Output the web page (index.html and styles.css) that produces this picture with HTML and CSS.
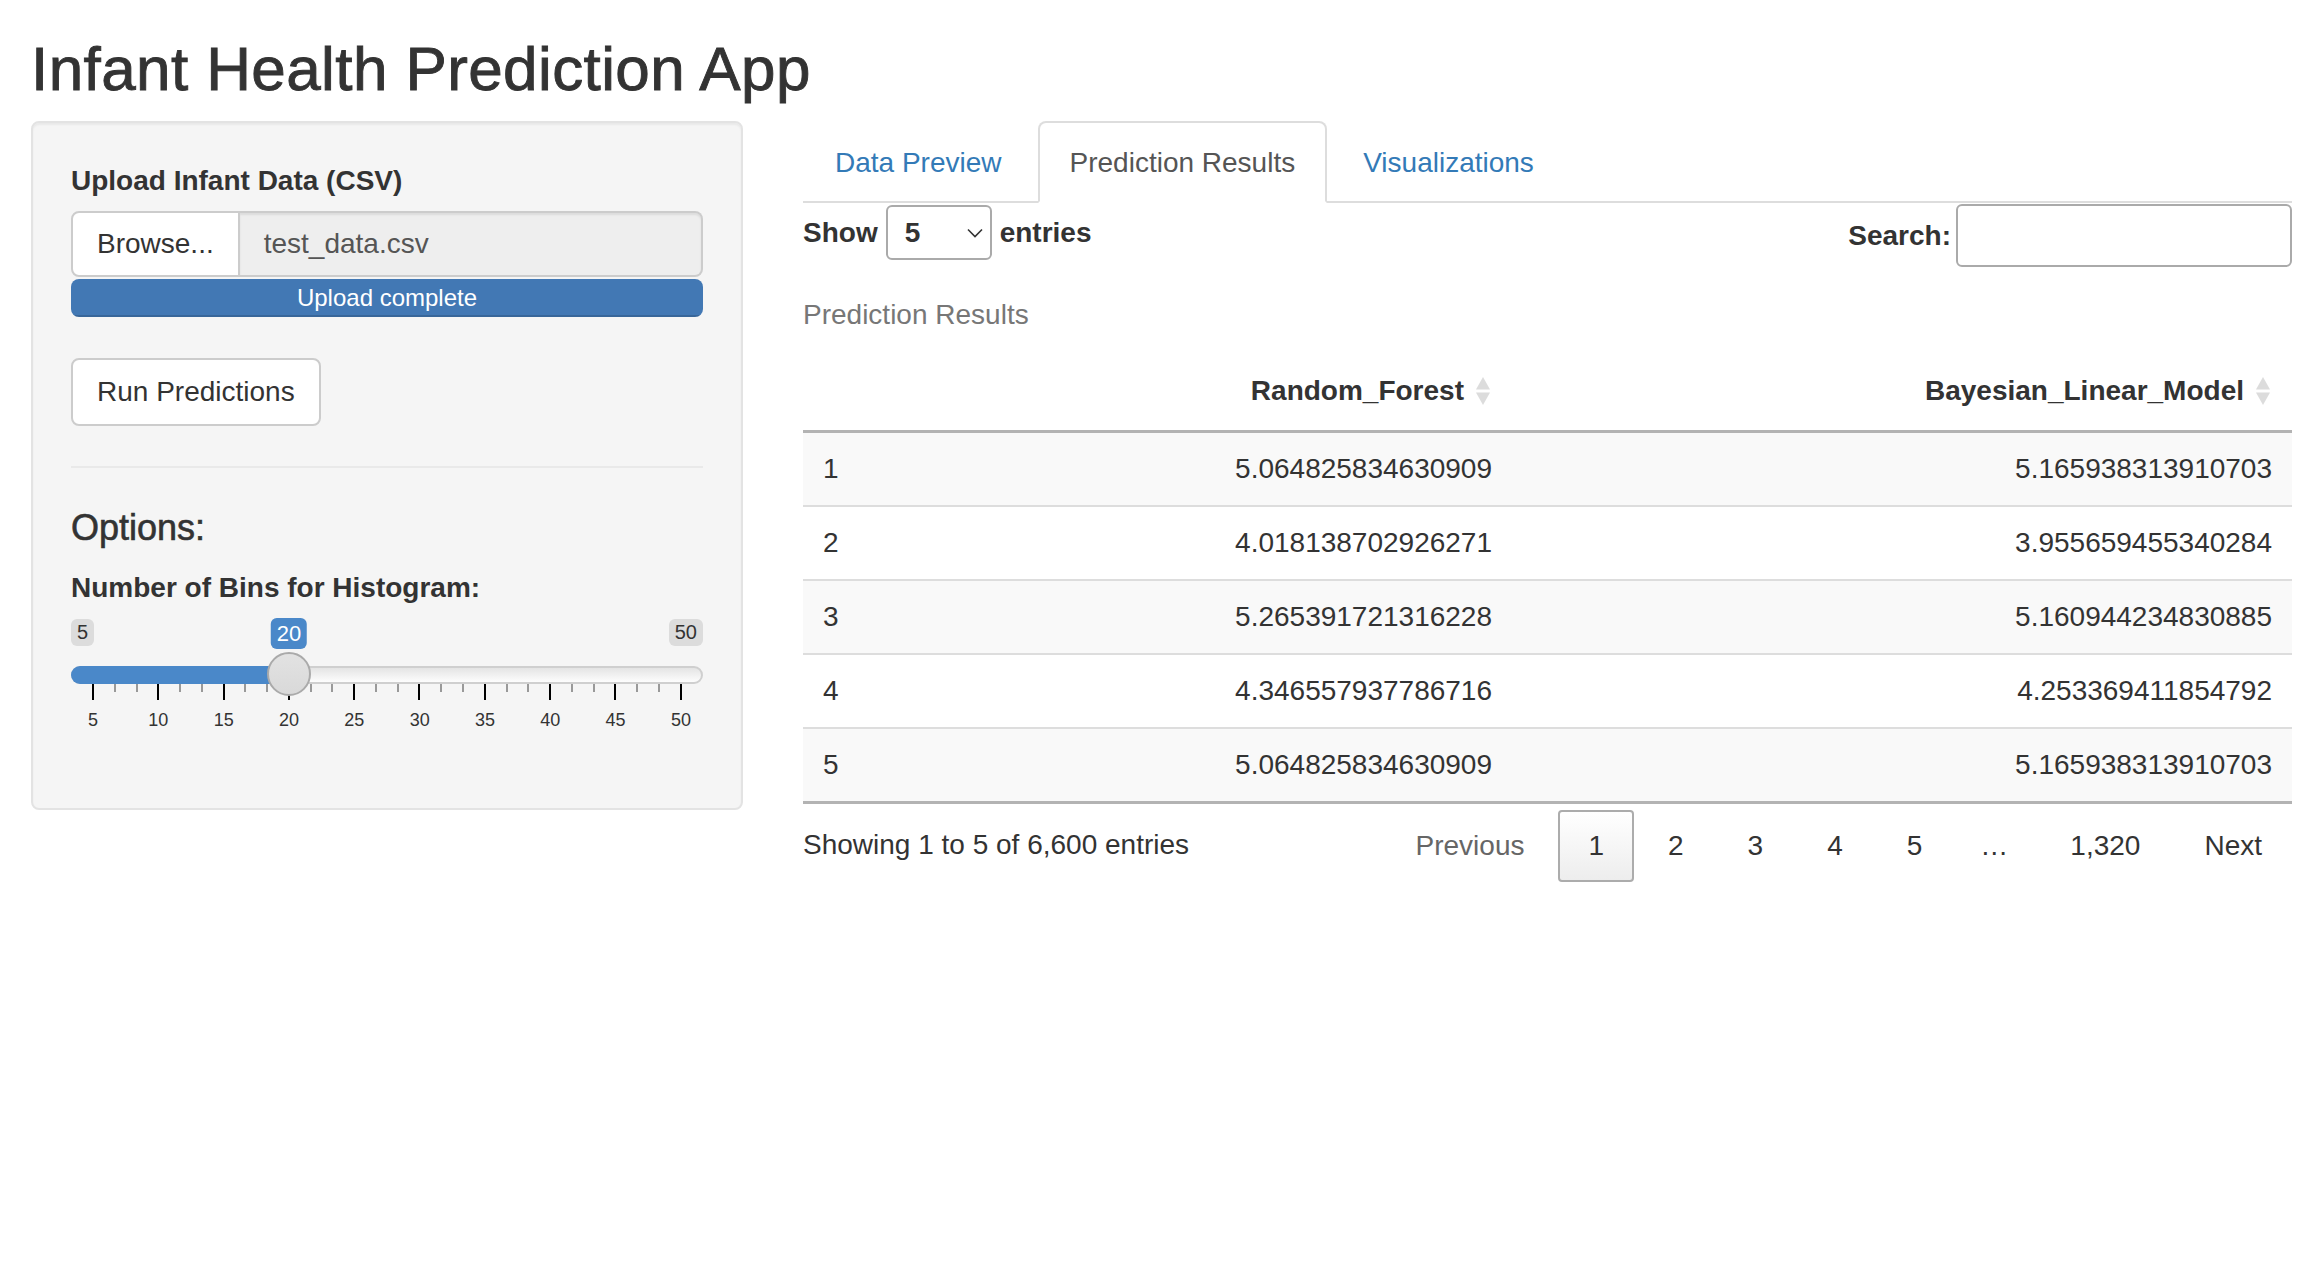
FILE: index.html
```html
<!DOCTYPE html>
<html lang="en">
<head>
<meta charset="utf-8">
<title>Infant Health Prediction App</title>
<link rel="stylesheet" href="styles.css">
</head>
<body>
<div class="page">
  <h2 class="app-title">Infant Health Prediction App</h2>
  <div class="layout">
    <aside class="sidebar">
      <div class="well">
        <div class="file-group">
          <label class="control-label">Upload Infant Data (CSV)</label>
          <div class="input-group">
            <span class="btn-browse">Browse...</span>
            <span class="file-name">test_data.csv</span>
          </div>
          <div class="progress"><div class="progress-bar">Upload complete</div></div>
        </div>
        <button class="btn-run" type="button">Run Predictions</button>
        <hr class="divider">
        <h4 class="options-title">Options:</h4>
        <div class="slider-group">
          <label class="control-label">Number of Bins for Histogram:</label>
          <div class="irs">
            <div class="irs-top">
              <span class="irs-min">5</span>
              <span class="irs-max">50</span>
            </div>
            <span class="irs-single" style="left: calc(22px + (100% - 44px) * 0.33333)">20</span>
            <div class="irs-track">
              <div class="irs-line"></div>
              <span class="irs-bar" style="width: calc(22px + (100% - 44px) * 0.33333)"></span>
              <span class="irs-handle" style="left: calc((100% - 44px) * 0.33333)"></span>
            </div>
            <div class="irs-grid">
              <span class="tick"></span><span class="tick small"></span><span class="tick small"></span>
              <span class="tick"></span><span class="tick small"></span><span class="tick small"></span>
              <span class="tick"></span><span class="tick small"></span><span class="tick small"></span>
              <span class="tick"></span><span class="tick small"></span><span class="tick small"></span>
              <span class="tick"></span><span class="tick small"></span><span class="tick small"></span>
              <span class="tick"></span><span class="tick small"></span><span class="tick small"></span>
              <span class="tick"></span><span class="tick small"></span><span class="tick small"></span>
              <span class="tick"></span><span class="tick small"></span><span class="tick small"></span>
              <span class="tick"></span><span class="tick small"></span><span class="tick small"></span>
              <span class="tick"></span>
            </div>
            <div class="irs-grid-text">
              <span>5</span><span>10</span><span>15</span><span>20</span><span>25</span>
              <span>30</span><span>35</span><span>40</span><span>45</span><span>50</span>
            </div>
          </div>
        </div>
      </div>
    </aside>

    <main class="main">
      <ul class="nav-tabs">
        <li class="tab"><a>Data Preview</a></li>
        <li class="tab active"><a>Prediction Results</a></li>
        <li class="tab"><a>Visualizations</a></li>
      </ul>

      <div class="dt-wrapper">
        <div class="dt-top">
          <label class="dt-length">Show<span class="dt-select"><span>5</span><svg class="chev" width="16" height="10" viewBox="0 0 16 10"><path d="M1 1.5 L8 8.5 L15 1.5" fill="none" stroke="#333" stroke-width="1.6"/></svg></span>entries</label>
          <label class="dt-filter">Search:<input class="dt-search" type="search"></label>
        </div>

        <table class="dt">
          <caption>Prediction Results</caption>
          <colgroup><col class="c1"><col class="c2"><col class="c3"></colgroup>
          <thead>
            <tr>
              <th></th>
              <th class="num">Random_Forest<svg class="sort" width="14" height="28" viewBox="0 0 14 28"><path d="M7 0 L14 12.5 L0 12.5 Z" fill="#dcdcdc"/><path d="M0 15.5 L14 15.5 L7 28 Z" fill="#dcdcdc"/></svg></th>
              <th class="num">Bayesian_Linear_Model<svg class="sort" width="14" height="28" viewBox="0 0 14 28"><path d="M7 0 L14 12.5 L0 12.5 Z" fill="#dcdcdc"/><path d="M0 15.5 L14 15.5 L7 28 Z" fill="#dcdcdc"/></svg></th>
            </tr>
          </thead>
          <tbody>
            <tr><td>1</td><td class="num">5.064825834630909</td><td class="num">5.165938313910703</td></tr>
            <tr><td>2</td><td class="num">4.018138702926271</td><td class="num">3.955659455340284</td></tr>
            <tr><td>3</td><td class="num">5.265391721316228</td><td class="num">5.160944234830885</td></tr>
            <tr><td>4</td><td class="num">4.346557937786716</td><td class="num">4.253369411854792</td></tr>
            <tr><td>5</td><td class="num">5.064825834630909</td><td class="num">5.165938313910703</td></tr>
          </tbody>
        </table>

        <div class="dt-bottom">
          <div class="dt-info">Showing 1 to 5 of 6,600 entries</div>
          <div class="dt-paginate">
            <a class="pg disabled">Previous</a><a class="pg current">1</a><a class="pg">2</a><a class="pg">3</a><a class="pg">4</a><a class="pg">5</a><span class="ellipsis">…</span><a class="pg">1,320</a><a class="pg">Next</a>
          </div>
        </div>
      </div>
    </main>
  </div>
</div>
</body>
</html>
```

FILE: styles.css
```css
* { box-sizing: border-box; }

html, body {
  margin: 0;
  padding: 0;
  background: #fff;
}

body {
  font-family: "Liberation Sans", Arial, Helvetica, sans-serif;
  font-size: 28px;
  line-height: 40px;
  color: #333;
}

.page {
  padding: 0 20px 0 31px;
}

.app-title {
  font-size: 62px;
  font-weight: 400;
  line-height: 66px;
  margin: 36px 0 19px;
  color: #333;
  letter-spacing: 0.4px;
  -webkit-text-stroke: 0.9px #333;
}

.layout {
  display: grid;
  grid-template-columns: 712px 1fr;
  column-gap: 60px;
  align-items: start;
}

/* ---------- Sidebar ---------- */
.well {
  background: #f5f5f5;
  border: 2px solid #e3e3e3;
  border-radius: 8px;
  box-shadow: inset 0 2px 2px rgba(0, 0, 0, 0.05);
  padding: 38px;
}

.control-label {
  display: block;
  font-weight: 700;
  margin-bottom: 10px;
}

.input-group {
  display: flex;
  height: 66px;
}

.btn-browse {
  display: flex;
  align-items: center;
  padding: 0 24px;
  background: #fff;
  border: 2px solid #ccc;
  border-radius: 8px 0 0 8px;
  color: #333;
}

.file-name {
  flex: 1;
  display: flex;
  align-items: center;
  padding: 0 24px;
  background: #eee;
  border: 2px solid #ccc;
  border-left: 0;
  border-radius: 0 8px 8px 0;
  color: #555;
  box-shadow: inset 0 2px 2px rgba(0, 0, 0, 0.075);
}

.progress {
  margin-top: 2px;
  height: 38px;
  border-radius: 8px;
  overflow: hidden;
  background: #f5f5f5;
}

.progress-bar {
  height: 100%;
  background: #4278b4;
  color: #fff;
  font-size: 24px;
  line-height: 38px;
  text-align: center;
  box-shadow: inset 0 -2px 0 rgba(0, 0, 0, 0.15);
}

.btn-run {
  display: block;
  margin-top: 41px;
  height: 68px;
  padding: 12px 24px;
  font: inherit;
  line-height: 40px;
  color: #333;
  background: #fff;
  border: 2px solid #ccc;
  border-radius: 8px;
}

.divider {
  margin: 40px 0;
  border: 0;
  border-top: 2px solid #e9e9e9;
  height: 0;
}

.options-title {
  font-size: 36px;
  font-weight: 400;
  line-height: 39.6px;
  margin: 0 0 20px;
  color: #333;
  -webkit-text-stroke: 0.6px #333;
}

.slider-group {
  margin-bottom: 39px;
}

.irs {
  position: relative;
}

.irs-top {
  display: flex;
  justify-content: space-between;
  align-items: flex-start;
  height: 30px;
  padding-top: 1px;
}

.irs-min,
.irs-max {
  font-size: 20px;
  line-height: 23px;
  padding: 2px 6px;
  background: rgba(0, 0, 0, 0.1);
  border-radius: 6px;
  color: #333;
}

.irs-single {
  position: absolute;
  top: 0;
  transform: translateX(-50%);
  font-size: 22px;
  line-height: 27px;
  padding: 2px 6px;
  background: #4a88c9;
  color: #fff;
  border-radius: 6px;
}

.irs-track {
  position: relative;
  margin-top: 18px;
  height: 18px;
}

.irs-line {
  height: 18px;
  border: 2px solid #cfcfcf;
  border-radius: 9px;
  background: linear-gradient(to bottom, #e4e4e4, #fdfdfd);
}

.irs-bar {
  position: absolute;
  top: 0;
  left: 0;
  height: 18px;
  background: #4a88c9;
  border-radius: 9px 0 0 9px;
}

.irs-handle {
  position: absolute;
  top: -14px;
  width: 44px;
  height: 44px;
  border-radius: 50%;
  border: 2px solid #aaa;
  background: linear-gradient(to bottom, #e2e2e2, #d9d9d9);
}

.irs-grid {
  display: flex;
  justify-content: space-between;
  align-items: flex-start;
  padding: 0 21px;
  height: 16px;
}

.tick {
  width: 2px;
  height: 16px;
  background: #000;
}

.tick.small {
  height: 8px;
  background: #999;
}

.irs-grid-text {
  display: flex;
  justify-content: space-between;
  padding: 0 2px;
  margin-top: 9px;
  font-size: 18px;
  line-height: 22px;
  color: #333;
}

.irs-grid-text span {
  width: 40px;
  text-align: center;
}

/* ---------- Tabs ---------- */
.nav-tabs {
  list-style: none;
  margin: 0;
  padding: 0;
  display: flex;
  border-bottom: 2px solid #ddd;
}

.nav-tabs .tab {
  margin-bottom: -2px;
}

.nav-tabs .tab a {
  display: block;
  padding: 20px 30px 18px;
  margin-right: 4px;
  border: 2px solid transparent;
  border-radius: 8px 8px 0 0;
  color: #337ab7;
  line-height: 40px;
}

.nav-tabs .tab.active a {
  color: #555;
  background: #fff;
  border-color: #ddd #ddd transparent;
}

/* ---------- DataTable ---------- */
.dt-top {
  display: flex;
  justify-content: space-between;
  align-items: flex-start;
  height: 64px;
}

.dt-length {
  display: flex;
  align-items: center;
  height: 55px;
  margin-top: 2px;
  font-weight: 700;
}

.dt-select {
  display: flex;
  align-items: center;
  justify-content: space-between;
  width: 106px;
  height: 55px;
  margin: 0 8px;
  padding: 0 7px 0 17px;
  border: 2px solid #aaa;
  border-radius: 6px;
  font-weight: 700;
}

.chev {
  display: block;
}

.dt-filter {
  display: flex;
  align-items: center;
  margin-top: 1px;
  font-weight: 700;
}

.dt-search {
  width: 336px;
  height: 63px;
  margin: 0 0 0 5px;
  padding: 10px;
  border: 2px solid #aaa;
  border-radius: 6px;
  background: transparent;
  font: inherit;
  font-weight: 400;
}

.dt {
  width: 100%;
  border-collapse: separate;
  border-spacing: 0;
  table-layout: fixed;
}

.dt .c1 { width: 300px; }
.dt .c2 { width: 409px; }
.dt .c3 { width: auto; }

.dt caption {
  caption-side: top;
  text-align: left;
  color: #777;
  padding: 28px 0 14px;
  line-height: 40px;
}

.dt th {
  padding: 22px 22px 19px 20px;
  font-weight: 700;
  line-height: 40px;
  text-align: left;
  border-bottom: 3px solid #b3b3b3;
  white-space: nowrap;
}

.dt th.num {
  text-align: right;
}

.sort {
  display: inline-block;
  vertical-align: middle;
  margin-left: 12px;
  margin-top: -4px;
}

.dt td {
  padding: 16px 20px;
  line-height: 40px;
  border-top: 2px solid #ddd;
}

.dt td.num {
  text-align: right;
}

.dt tbody tr:first-child td {
  border-top: 0;
}

.dt tbody tr:nth-child(odd) td {
  background: #f9f9f9;
}

.dt tbody tr:last-child td {
  border-bottom: 3px solid #b3b3b3;
}

.dt-bottom {
  display: flex;
  justify-content: space-between;
  align-items: flex-start;
}

.dt-info {
  padding-top: 21px;
}

.dt-paginate {
  display: flex;
  padding-top: 6px;
}

.pg {
  display: block;
  padding: 14px 28px;
  margin-left: 4px;
  border: 2px solid transparent;
  border-radius: 4px;
  color: #333;
  line-height: 40px;
}

.pg.disabled {
  color: #666;
}

.pg.current {
  border-color: #acacac;
  background: linear-gradient(to bottom, #ffffff, #ededed);
}

.ellipsis {
  display: block;
  padding: 16px 28px;
  line-height: 40px;
  color: #333;
}
```
